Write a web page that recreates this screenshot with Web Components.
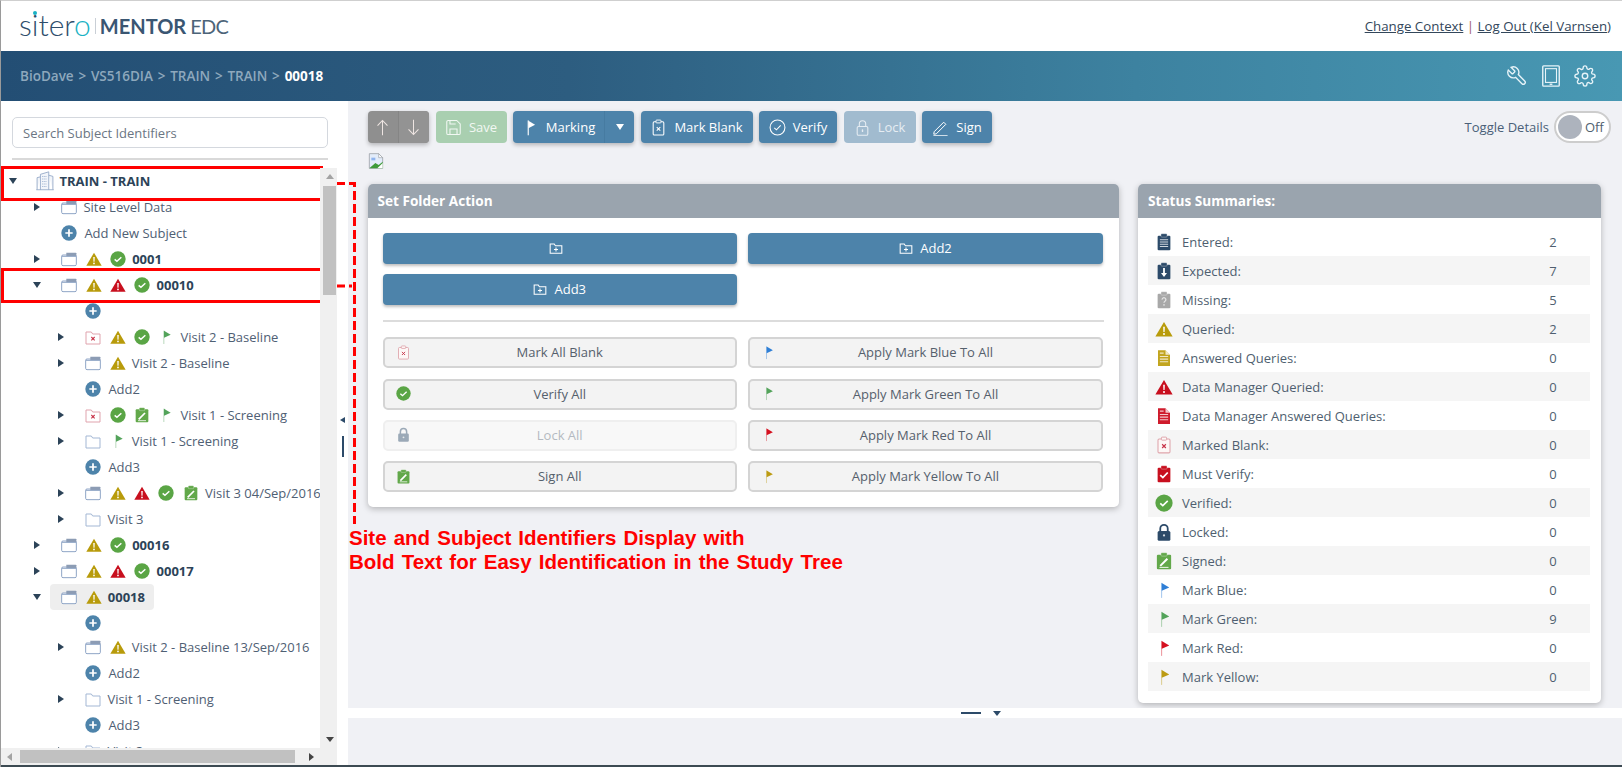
<!DOCTYPE html>
<html lang="en">
<head>
<meta charset="utf-8">
<title>Mentor EDC</title>
<style>
  html, body { margin: 0; padding: 0; background: #f0f1f5; overflow: hidden; }
</style>
</head>
<body>
<edc-app>
  <edc-header></edc-header>
  <edc-banner path="BioDave > VS516DIA > TRAIN > TRAIN" current="00018"></edc-banner>
  <edc-sidebar slot="side">
    <edc-row level="0" arrow="down" icons="building" bold>TRAIN - TRAIN</edc-row>
    <edc-row level="1" arrow="right" icons="folder-tab">Site Level Data</edc-row>
    <edc-row level="1" icons="plus" add>Add New Subject</edc-row>
    <edc-row level="1" arrow="right" icons="folder-tab warn check" bold>0001</edc-row>
    <edc-row level="1" arrow="down" icons="folder-tab warn warn-red check" bold>00010</edc-row>
    <edc-row level="2" icons="plus" add></edc-row>
    <edc-row level="2" arrow="right" icons="folder-x warn check flag-green">Visit 2 - Baseline</edc-row>
    <edc-row level="2" arrow="right" icons="folder-tab warn">Visit 2 - Baseline</edc-row>
    <edc-row level="2" icons="plus" add>Add2</edc-row>
    <edc-row level="2" arrow="right" icons="folder-x check signed flag-green">Visit 1 - Screening</edc-row>
    <edc-row level="2" arrow="right" icons="folder flag-green">Visit 1 - Screening</edc-row>
    <edc-row level="2" icons="plus" add>Add3</edc-row>
    <edc-row level="2" arrow="right" icons="folder-tab warn warn-red check signed">Visit 3 04/Sep/2016</edc-row>
    <edc-row level="2" arrow="right" icons="folder">Visit 3</edc-row>
    <edc-row level="1" arrow="right" icons="folder-tab warn check" bold>00016</edc-row>
    <edc-row level="1" arrow="right" icons="folder-tab warn warn-red check" bold>00017</edc-row>
    <edc-row level="1" arrow="down" icons="folder-tab warn" bold selected>00018</edc-row>
    <edc-row level="2" icons="plus" add></edc-row>
    <edc-row level="2" arrow="right" icons="folder-tab warn" style="margin-top:-2px">Visit 2 - Baseline 13/Sep/2016</edc-row>
    <edc-row level="2" icons="plus" add>Add2</edc-row>
    <edc-row level="2" arrow="right" icons="folder">Visit 1 - Screening</edc-row>
    <edc-row level="2" icons="plus" add>Add3</edc-row>
    <edc-row level="2" arrow="right" icons="folder">Visit 3</edc-row>
  </edc-sidebar>
  <edc-main slot="main">
    <edc-toolbar>
      <edc-nav></edc-nav>
      <edc-tool icon="t-save" kind="save" style="width:71px">Save</edc-tool>
      <edc-tool icon="t-flag" caret style="width:121px">Marking</edc-tool>
      <edc-tool icon="t-clip" style="width:112px">Mark Blank</edc-tool>
      <edc-tool icon="t-check" style="width:78px">Verify</edc-tool>
      <edc-tool icon="t-lock" kind="off" style="width:72px">Lock</edc-tool>
      <edc-tool icon="t-pen" style="width:70px">Sign</edc-tool>
      <edc-toggle>Toggle Details</edc-toggle>
    </edc-toolbar>
    <edc-icon name="broken" size="16" class="broken"></edc-icon>
    <edc-cards>
      <edc-card title="Set Folder Action" style="width:751.5px">
        <edc-grid>
          <edc-add></edc-add>
          <edc-add>Add2</edc-add>
          <edc-add>Add3</edc-add>
        </edc-grid>
        <edc-rule></edc-rule>
        <edc-grid>
          <edc-action icon="blank">Mark All Blank</edc-action>
          <edc-action icon="flag-blue">Apply Mark Blue To All</edc-action>
          <edc-action icon="check">Verify All</edc-action>
          <edc-action icon="flag-green">Apply Mark Green To All</edc-action>
          <edc-action icon="locked" disabled>Lock All</edc-action>
          <edc-action icon="flag-red">Apply Mark Red To All</edc-action>
          <edc-action icon="signed">Sign All</edc-action>
          <edc-action icon="flag-yellow">Apply Mark Yellow To All</edc-action>
        </edc-grid>
      </edc-card>
      <edc-card title="Status Summaries:" flush style="width:463px">
        <edc-stat icon="entered" value="2">Entered:</edc-stat>
        <edc-stat icon="expected" value="7">Expected:</edc-stat>
        <edc-stat icon="missing" value="5">Missing:</edc-stat>
        <edc-stat icon="warn" value="2">Queried:</edc-stat>
        <edc-stat icon="answered" value="0">Answered Queries:</edc-stat>
        <edc-stat icon="warn-red" value="0">Data Manager Queried:</edc-stat>
        <edc-stat icon="answered-red" value="0">Data Manager Answered Queries:</edc-stat>
        <edc-stat icon="blank" value="0">Marked Blank:</edc-stat>
        <edc-stat icon="must" value="0">Must Verify:</edc-stat>
        <edc-stat icon="check" value="0">Verified:</edc-stat>
        <edc-stat icon="locked" value="0">Locked:</edc-stat>
        <edc-stat icon="signed" value="0">Signed:</edc-stat>
        <edc-stat icon="flag-blue" value="0">Mark Blue:</edc-stat>
        <edc-stat icon="flag-green" value="9">Mark Green:</edc-stat>
        <edc-stat icon="flag-red" value="0">Mark Red:</edc-stat>
        <edc-stat icon="flag-yellow" value="0">Mark Yellow:</edc-stat>
      </edc-card>
    </edc-cards>
  </edc-main>
  <edc-callout></edc-callout>
</edc-app>

<script>
// all icons share a 24 x 24 box
const tri = c => `<path d="M12 2.5 23.5 22H.5Z" fill="${c}"/><path d="M10.9 9h2.2l-.3 7h-1.6Z" fill="#fff"/><circle cx="12" cy="18.6" r="1.3" fill="#fff"/>`;
const flag = c => `<rect x="8" y="2.5" width="1.5" height="20" fill="${c}" opacity=".4"/><path d="M9 2.5 19 8.5 9 13Z" fill="${c}"/>`;
const doc = c => `<path d="M4 1.5h10l6 6v15H4Z" fill="${c}"/><path d="M14 1.5v6h6Z" fill="#fff" opacity=".75"/><path d="M6.5 10h11M6.5 13.5h11M6.5 17h11M6.5 5.5h5" stroke="#fff" stroke-opacity=".75" stroke-width="1.5"/>`;
const clip = (c, inner) => `<rect x="3.5" y="3.5" width="17" height="19.5" rx="1.5" fill="${c}"/><rect x="8" y="1" width="8" height="4.5" rx="1" fill="${c}" stroke="#fff" stroke-opacity=".6" stroke-width=".7"/>${inner}`;
const ICONS = {
  'warn': tri('#b89b0b'),
  'warn-red': tri('#c80f1e'),
  'check': `<circle cx="12" cy="12" r="11.5" fill="#5aa545"/><path d="M7 12.5l3.4 3L17 9.3" fill="none" stroke="#fff" stroke-width="2.2"/>`,
  'plus': `<circle cx="12" cy="12" r="11.5" fill="#4d83aa"/><path d="M12 6.5v11M6.5 12h11" stroke="#fff" stroke-width="2.6"/>`,
  'flag-blue': flag('#2f7fd6'),
  'flag-green': flag('#53a35a'),
  'flag-red': flag('#d5101f'),
  'flag-yellow': flag('#bc9b12'),
  'folder': `<path d="M1.5 4.5h8l2 3h11v15h-21Z" fill="#fff" stroke="#a3b7d4" stroke-width="1.5" stroke-linejoin="round"/>`,
  'folder-tab': `<rect x="1" y="6" width="22" height="16" rx="2" fill="#fff" stroke="#8fa5c6" stroke-width="1.5"/><path d="M8 2.5h14a1 1 0 0 1 1 1V8H8Z" fill="#8c9cb4"/><path d="M1 8h22" stroke="#8fa5c6" stroke-width="1.5"/>`,
  'folder-x': `<path d="M1.5 4.5h8l2 3h11v15h-21Z" fill="#fff" stroke="#e0a3ad" stroke-width="1.5" stroke-linejoin="round"/><path d="M9.5 12l5 5M14.5 12l-5 5" stroke="#c8354a" stroke-width="1.6"/>`,
  'building': `<path d="M1.5 22.5h21M2.5 22.5V8l4-1M6.500 22.500V4L16.500 1v21.500M16.500 5l5 1.500v16" fill="#f2f5fa" stroke="#8ea4c4" stroke-width="1"/><path d="M8.500 6.500h6M8.500 9.500h6M8.500 12.500h6M8.500 15.500h6M8.500 18.500h6" stroke="#a9bbd6" stroke-width="1.3" stroke-dasharray="1.3 .7"/>`,
  'entered': clip('#2c4a69', `<path d="M6.5 9h11M6.5 12h11M6.5 15h11M6.5 18h11" stroke="#cfd6dd" stroke-width="1.6"/>`),
  'expected': clip('#2c4a69', `<path d="M12 8v8" stroke="#fff" stroke-width="2.4"/><path d="M8 14.5h8L12 20Z" fill="#fff"/>`),
  'missing': clip('#a8a8a8', `<path d="M9.5 11.5a2.5 2.5 0 1 1 3.8 2.1c-.9.6-1.3 1-1.3 2" fill="none" stroke="#e5e5e5" stroke-width="1.7"/><circle cx="12" cy="18.5" r="1.1" fill="#e5e5e5"/>`),
  'answered': doc('#c2a51f'),
  'answered-red': doc('#cf1b2c'),
  'blank': `<rect x="4" y="4" width="16" height="18.5" rx="1.5" fill="#fdf7f6" stroke="#dfa5ac" stroke-width="1.4"/><rect x="8.5" y="1.5" width="7" height="4" rx="1" fill="#fdf7f6" stroke="#dfa5ac" stroke-width="1.3"/><path d="M9.5 11l5 5M14.5 11l-5 5" stroke="#c8354a" stroke-width="1.5"/>`,
  'must': clip('#c80f1e', `<path d="M7 13.5l3.5 3.3L17 10" fill="none" stroke="#fff" stroke-width="2.4"/>`),
  'locked': `<path d="M7 11V7.5a5 5 0 0 1 10 0V11" fill="none" stroke="#2c4a69" stroke-width="2.4"/><rect x="3.5" y="10.5" width="17" height="13" rx="2" fill="#2c4a69"/><circle cx="12" cy="16.5" r="1.5" fill="#cfd6dd"/>`,
  'signed': `<rect x="2.5" y="3.5" width="19" height="19.5" rx="1.5" fill="#62a84a"/><rect x="8" y="1" width="8" height="4.5" rx="1" fill="#62a84a" stroke="#fff" stroke-opacity=".6" stroke-width=".7"/><path d="M7 18.5l9.5-9.500" stroke="#fff" stroke-width="2.6"/><path d="M6 20.5h12" stroke="#fff" stroke-width="1.2"/>`,
  'broken': `<path d="M2 1h14l6 6v16H2Z" fill="#e3ecf9" stroke="#9aa0a6" stroke-width="1.2"/><path d="M16 1v6h6Z" fill="#fff" stroke="#9aa0a6"/><path d="M5 7h6v4H5Z" fill="#8fb4ee"/><path d="M2 23l9-8 5 3 6-5v10Z" fill="#3f9b3a"/><path d="M14 23l8-8v8Z" fill="#fff"/>`,
  't-save': `<path d="M19.5 22H4.5a2 2 0 0 1-2-2V4a2 2 0 0 1 2-2h12l5 5v13a2 2 0 0 1-2 2z" fill="none" stroke="currentColor" stroke-width="1.5"/><path d="M17 22v-8H7v8M7 2v5h8" fill="none" stroke="currentColor" stroke-width="1.5"/>`,
  't-flag': `<rect x="8" y="2" width="1.6" height="21" fill="currentColor"/><path d="M9 2.5 18.5 8 9 13Z" fill="currentColor"/>`,
  't-clip': `<rect x="4.5" y="4" width="15" height="18.5" rx="1.5" fill="none" stroke="currentColor" stroke-width="1.5"/><rect x="8.5" y="1.5" width="7" height="4" rx="1" fill="#4d83aa" stroke="currentColor" stroke-width="1.3"/><path d="M9.5 11.5l5 5M14.5 11.5l-5 5" stroke="currentColor" stroke-width="1.5"/>`,
  't-check': `<circle cx="12" cy="12" r="10.5" fill="none" stroke="currentColor" stroke-width="1.5"/><path d="M7.5 12.5l3 2.8L16.5 9" fill="none" stroke="currentColor" stroke-width="1.5"/>`,
  't-lock': `<path d="M7.5 11V7a4.5 4.5 0 0 1 9 0v4" fill="none" stroke="currentColor" stroke-width="1.5"/><rect x="4.5" y="10.5" width="15" height="12.5" rx="2" fill="none" stroke="currentColor" stroke-width="1.5"/><rect x="11" y="14.5" width="2" height="4" rx="1" fill="currentColor"/>`,
  't-pen': `<path d="M3 18l-.5 3.5L6 21 19.5 7.5l-3-3Z" fill="none" stroke="currentColor" stroke-width="1.4" stroke-linejoin="round"/><path d="M2 23.5h20" stroke="currentColor" stroke-width="1.2"/>`,
  't-up': `<path d="M12 2v21M5 9.5 12 2l7 7.5" fill="none" stroke="currentColor" stroke-width="1.5"/>`,
  't-down': `<path d="M12 22V1M5 14.5 12 22l7-7.5" fill="none" stroke="currentColor" stroke-width="1.5"/>`,
  't-folder': `<path d="M2 5h7l2 3h11v13H2Z" fill="none" stroke="currentColor" stroke-width="1.8"/><path d="M12 11v7M8.5 14.5h7" stroke="currentColor" stroke-width="1.8"/>`,
  'wrench': `<g transform="translate(24 0) scale(-1 1)"><path d="M14.7 6.3a1 1 0 0 0 0 1.4l1.6 1.6a1 1 0 0 0 1.4 0l3.77-3.77a6 6 0 0 1-7.94 7.94l-6.91 6.91a2.12 2.12 0 0 1-3-3l6.91-6.91a6 6 0 0 1 7.94-7.94l-3.76 3.76z" fill="none" stroke="currentColor" stroke-width="1.5"/></g>`,
  'tablet': `<rect x="3" y="1" width="18" height="22" rx="1" fill="none" stroke="currentColor" stroke-width="1.5"/><rect x="6" y="4" width="12" height="15" fill="none" stroke="currentColor" stroke-width="1.2"/><path d="M10.5 21h3" stroke="currentColor" stroke-width="1.5"/>`,
  'gear': `<circle cx="12" cy="12" r="3" fill="none" stroke="currentColor" stroke-width="1.5"/><path d="M19.4 15a1.65 1.65 0 0 0 .33 1.82l.06.06a2 2 0 0 1 0 2.83 2 2 0 0 1-2.83 0l-.06-.06a1.65 1.65 0 0 0-1.82-.33 1.65 1.65 0 0 0-1 1.51V21a2 2 0 0 1-2 2 2 2 0 0 1-2-2v-.09A1.65 1.65 0 0 0 9 19.4a1.65 1.65 0 0 0-1.82.33l-.06.06a2 2 0 0 1-2.83 0 2 2 0 0 1 0-2.83l.06-.06a1.65 1.65 0 0 0 .33-1.82 1.65 1.65 0 0 0-1.51-1H3a2 2 0 0 1-2-2 2 2 0 0 1 2-2h.09A1.65 1.65 0 0 0 4.6 9a1.65 1.65 0 0 0-.33-1.82l-.06-.06a2 2 0 0 1 0-2.83 2 2 0 0 1 2.83 0l.06.06a1.65 1.65 0 0 0 1.82.33H9a1.65 1.65 0 0 0 1-1.51V3a2 2 0 0 1 2-2 2 2 0 0 1 2 2v.09a1.65 1.65 0 0 0 1 1.51 1.65 1.65 0 0 0 1.82-.33l.06-.06a2 2 0 0 1 2.83 0 2 2 0 0 1 0 2.83l-.06.06a1.65 1.65 0 0 0-.33 1.82V9a1.65 1.65 0 0 0 1.51 1H21a2 2 0 0 1 2 2 2 2 0 0 1-2 2h-.09a1.65 1.65 0 0 0-1.51 1z" fill="none" stroke="currentColor" stroke-width="1.5"/>`
};

// tiny base: the subclass gives css and html, the shadow root is set once
class EdcBase extends HTMLElement {
  constructor() {
    super();
    this.attachShadow({ mode: 'open' });
  }
  connectedCallback() {
    this.shadowRoot.innerHTML = `<style>${this.css()}</style>${this.html()}`;
  }
  css() { return ':host{display:block}'; }
  html() { return '<slot></slot>'; }
}

class EdcIcon extends EdcBase {
  css() {
    const s = this.getAttribute('size') || 16;
    return `:host{display:inline-flex;width:${s}px;height:${s}px;flex:none}svg{width:100%;height:100%;display:block}`;
  }
  html() {
    return `<svg viewBox="0 0 24 24" xmlns="http://www.w3.org/2000/svg">${ICONS[this.getAttribute('name')] || ''}</svg>`;
  }
}

class EdcApp extends EdcBase {
  css() {
    return `:host{display:grid;grid-template-rows:50px 50px 664px 2px;position:relative;width:1622px;height:767px;box-sizing:border-box;
      border-top:1px solid #cfcfcf;border-left:1px solid #9a9a9a;font-family:"Open Sans",sans-serif;font-size:13px;color:#4f5f70;background:#f0f1f5;overflow:hidden}
      .content{display:flex;min-height:0}
      .split{width:11px;flex:none;background:#fff;display:flex;flex-direction:column;align-items:center;padding-top:316px;box-sizing:border-box}
      .split i{display:block;width:0;height:0;border-style:solid;border-width:3.5px 5px 3.5px 0;border-color:transparent #2c4a69 transparent transparent}
      .split b{display:block;width:2px;height:21px;background:#2c4a69;margin-top:13px}
      .foot{background:#3c4a52}`;
  }
  html() {
    return `<slot></slot><div class="content"><slot name="side"></slot>
      <div class="split"><i></i><b></b></div><slot name="main"></slot></div><div class="foot"></div>`;
  }
}

class EdcHeader extends EdcBase {
  css() {
    return `:host{display:flex;align-items:center;justify-content:space-between;background:#fff;padding:0 11px 0 18px;height:50px}
      .logo{display:flex;align-items:center;color:#3a5672}
      .s{position:relative;font-family:Lato,sans-serif;font-weight:300;font-size:30px;line-height:36px;margin-top:-4px;color:#2e4d6b}
      .s em{font-style:normal;color:#19b2c4}
      .s::after{content:"";position:absolute;left:14px;top:5px;width:4px;height:4px;border-radius:50%;background:#19b2c4}
      .d{width:1px;height:16px;background:#c9cfd6;margin:0 4px 0 4px}
      .m{font-family:Lato,sans-serif;font-weight:700;font-size:20px}
      .e{font-family:Lato,sans-serif;font-weight:400;font-size:20px;letter-spacing:-.7px;color:#4c6479;margin-left:4px}
      nav{font-size:13.3px;padding-bottom:1px}
      a{color:#33475b;text-decoration:underline}
      s{text-decoration:none;color:#a05a6a}`;
  }
  html() {
    return `<div class="logo"><span class="s">siter<em>o</em></span><span class="d"></span><span class="m">MENTOR</span><span class="e">EDC</span></div>
      <nav><a>Change Context</a> <s>|</s> <a>Log Out (Kel Varnsen)</a></nav>`;
  }
}

class EdcBanner extends EdcBase {
  css() {
    return `:host{display:flex;align-items:center;justify-content:space-between;height:50px;padding:0 26px 0 19px;
      background:linear-gradient(90deg,#234e74 0%,#2d5d80 35%,#3d82a0 70%,#4898b3 100%);color:#fff}
      .path{font-weight:600;font-size:13.5px;word-spacing:1.3px;color:#8ea8bd;white-space:pre}
      b{color:#fff;font-weight:700}
      .tools{display:flex;gap:12px;color:#e6f3f8}`;
  }
  html() {
    return `<div class="path">${this.getAttribute('path')} &gt; <b>${this.getAttribute('current')}</b></div>
      <div class="tools"><edc-icon name="wrench" size="22"></edc-icon><edc-icon name="tablet" size="22"></edc-icon><edc-icon name="gear" size="22"></edc-icon></div>`;
  }
}

class EdcSidebar extends EdcBase {
  css() {
    return `:host{display:flex;flex-direction:column;width:336px;flex:none;background:#fff;min-height:0}
      .top{padding:16px 9px 0 11px;height:67px;box-sizing:border-box;flex:none}
      input{display:block;width:100%;box-sizing:border-box;height:31px;border:1px solid #d4d8de;border-radius:5px;padding:0 10px;font:13px "Open Sans",sans-serif;color:#4f5f70;outline:none}
      input::placeholder{color:#6b7683;opacity:1}
      hr{border:0;border-top:2px solid #d9d9d9;margin:10px 0 0}
      .mid{flex:1;display:flex;min-height:0}
      .tree{width:319px;overflow:hidden;flex:none;white-space:nowrap}
      .v{flex:1;background:#f0f0f0;position:relative;display:flex;flex-direction:column;align-items:center;padding:0 0 0 2px}
      .v .thumb{width:13px;height:109px;background:#c1c1c1;margin-top:7px}
      .up,.dn,.lf,.rt{width:0;height:0;border-style:solid;flex:none}
      .up{border-width:0 4px 5px;border-color:transparent transparent #a3a3a3;margin-top:6px}
      .dn{border-width:5px 4px 0;border-color:#444 transparent transparent;margin:auto 0 6px}
      .h{height:17px;background:#f0f0f0;display:flex;align-items:center;flex:none;padding-right:17px;box-sizing:border-box}
      .h .thumb{width:275px;height:13px;background:#c1c1c1;margin:0 auto 0 8px}
      .lf{border-width:4px 5px 4px 0;border-color:transparent #a3a3a3 transparent transparent;margin-left:6px}
      .rt{border-width:4px 0 4px 5px;border-color:transparent transparent transparent #444;margin-right:6px}`;
  }
  html() {
    return `<div class="top"><input placeholder="Search Subject Identifiers"><hr></div>
      <div class="mid"><div class="tree"><slot></slot></div>
        <div class="v"><i class="up"></i><div class="thumb"></div><i class="dn"></i></div></div>
      <div class="h"><i class="lf"></i><div class="thumb"></div><i class="rt"></i></div>`;
  }
}

class EdcRow extends EdcBase {
  css() {
    const lv = +this.getAttribute('level') || 0;
    return `:host{display:block;height:26px;white-space:nowrap}
      .r{display:flex;align-items:center;height:26px;padding-left:${3 + 24 * lv}px}
      .ar{width:29px;flex:none;display:flex;padding-left:5px;box-sizing:border-box}
      .ar i{display:block;width:0;height:0;border-style:solid}
      .right{border-width:4.5px 0 4.5px 6px;border-color:transparent transparent transparent #2c4358;margin-left:1px}
      .down{border-width:6px 4.5px 0;border-color:#2c4358 transparent transparent}
      .c{display:flex;align-items:center;height:26px;border-radius:4px}
      :host([selected]) .c{background:#eee;margin-left:-7px;padding:0 9px 0 7px}
      .cell{width:24.4px;flex:none;display:flex;justify-content:center}
      .t{margin-left:2px;font-size:13px;color:#4f6074}
      :host([bold]) .t{font-weight:700;color:#2c4358}
      :host([add]) .t{margin-left:3px}`;
  }
  html() {
    const arrow = this.getAttribute('arrow');
    const cells = (this.getAttribute('icons') || '').split(' ').filter(Boolean)
      .map(n => `<span class="cell"><edc-icon name="${n}" size="${n === 'building' ? 20 : 16}"></edc-icon></span>`).join('');
    return `<div class="r"><span class="ar">${arrow ? `<i class="${arrow}"></i>` : ''}</span>
      <div class="c">${cells}<span class="t"><slot></slot></span></div></div>`;
  }
}

class EdcMain extends EdcBase {
  css() {
    return `:host{display:flex;flex-direction:column;flex:1;min-width:0;background:#f0f1f5}
      .top{height:607px;flex:none;padding:10px 11px 0 19.5px;box-sizing:border-box}
      .band{height:10px;background:#fff;flex:none;position:relative;display:flex;align-items:center;padding-left:613px}
      .band b{display:block;width:20px;height:2px;background:#2c4a69}
      .band i{display:block;width:0;height:0;border-style:solid;border-width:5px 4px 0;border-color:#2c4a69 transparent transparent;margin-left:12px}
      ::slotted(.broken){display:flex;margin-top:10px}`;
  }
  html() {
    return `<div class="top"><slot></slot></div><div class="band"><b></b><i></i></div>`;
  }
}

class EdcToolbar extends EdcBase {
  css() { return ':host{display:flex;gap:6.5px;height:32px;align-items:stretch}'; }
}

class EdcNav extends EdcBase {
  css() {
    return `:host{display:flex;width:61.5px;border-radius:4px;background:#8f8f8f;color:#eee5e2;box-shadow:0 2px 4px rgba(0,0,0,.25);overflow:hidden}
      span{flex:1;display:flex;align-items:center;justify-content:center}
      span+span{border-left:1px solid #858585;background:#939393}`;
  }
  html() {
    return `<span><edc-icon name="t-up" size="17"></edc-icon></span><span><edc-icon name="t-down" size="17"></edc-icon></span>`;
  }
}

class EdcTool extends EdcBase {
  css() {
    return `:host{display:flex;align-items:center;border-radius:4px;background:#4d83aa;color:#fff;box-shadow:0 2px 4px rgba(0,0,0,.25);flex:none;box-sizing:border-box}
      :host([kind=save]){background:#a9cfb0;color:#f2f8f3;box-shadow:none}
      :host([kind=off]){background:#a1bbcf;color:#e6edf3;box-shadow:none}
      .m{flex:1;display:flex;align-items:center;justify-content:center;gap:7px;height:100%}
      .c{width:29px;height:100%;display:flex;align-items:center;justify-content:center;border-left:1px solid #467ba1}
      .c i{display:block;width:0;height:0;border-style:solid;border-width:6px 4.5px 0;border-color:#fff transparent transparent}`;
  }
  html() {
    return `<div class="m"><edc-icon name="${this.getAttribute('icon')}" size="17"></edc-icon><span><slot></slot></span></div>${this.hasAttribute('caret') ? '<div class="c"><i></i></div>' : ''}`;
  }
}

class EdcToggle extends EdcBase {
  css() {
    return `:host{display:flex;align-items:center;gap:5px;margin-left:auto;color:#4a6078;font-size:13px}
      .sw{display:flex;align-items:center;width:57px;height:32px;box-sizing:border-box;border:2px solid #cdcdcd;border-radius:16px;background:#fff;padding-left:2px;color:#4f5f70}
      .sw i{display:block;width:24px;height:24px;border-radius:50%;background:#adb3bd;margin-right:3px}`;
  }
  html() {
    return `<span><slot></slot></span><div class="sw"><i></i><span>Off</span></div>`;
  }
}

class EdcCards extends EdcBase {
  css() { return ':host{display:flex;gap:19px;align-items:flex-start;margin-top:15px}'; }
}

class EdcCard extends EdcBase {
  css() {
    return `:host{display:block;background:#fff;border-radius:5px;box-shadow:0 2px 6px rgba(0,0,0,.25);overflow:hidden;flex:none}
      h3{margin:0;height:34px;line-height:34px;padding:0 10px;background:#9aa4ae;color:#fff;font-size:13.6px;font-weight:700}
      .b{padding:15px}
      :host([flush]) .b{padding:9px 11px 12px 10px}`;
  }
  html() { return `<h3>${this.getAttribute('title')}</h3><div class="b"><slot></slot></div>`; }
}

class EdcGrid extends EdcBase {
  css() { return ':host{display:grid;grid-template-columns:354.5px 355px;column-gap:11px;row-gap:10.3px}'; }
}

class EdcRule extends EdcBase {
  css() { return ':host{display:block;border-top:2px solid #dcdcdc;margin:15px 0 15px}'; }
  html() { return ''; }
}

class EdcAdd extends EdcBase {
  css() {
    return `:host{display:flex;align-items:center;justify-content:center;gap:7px;height:31px;box-sizing:border-box;padding-bottom:2px;border-radius:4px;background:#4d83aa;color:#fff;box-shadow:0 2px 3px rgba(0,0,0,.25)}`;
  }
  html() { return `<edc-icon name="t-folder" size="14"></edc-icon><span><slot></slot></span>`; }
}

class EdcAction extends EdcBase {
  css() {
    return `:host{display:grid;grid-template-columns:1fr auto 1fr;align-items:center;height:31px;box-sizing:border-box;padding:0 0 1px 11px;
        border:2px solid #d4d4d4;border-radius:5px;background:#f3f3f3;color:#55606c}
      :host([disabled]){border-color:#efefef;background:#f8f8f8;color:#b4bac1}
      :host([disabled]) edc-icon{opacity:.45}
      span{margin-left:-11px}`;
  }
  html() {
    return `<edc-icon name="${this.getAttribute('icon')}" size="15"></edc-icon><span><slot></slot></span><i></i>`;
  }
}

class EdcStat extends EdcBase {
  css() {
    return `:host{display:flex;align-items:center;height:29px}
      :host(:nth-child(even)){background:#f5f5f5}
      edc-icon{margin-left:7px;margin-right:9px}
      .l{flex:1}
      .v{width:20px;margin-right:27px;text-align:center}`;
  }
  html() {
    return `<edc-icon name="${this.getAttribute('icon')}" size="18"></edc-icon><span class="l"><slot></slot></span><span class="v">${this.getAttribute('value')}</span>`;
  }
}

// the red notes drawn over the screenshot
class EdcCallout extends EdcBase {
  css() {
    return `:host{position:absolute;left:-1px;top:-1px;width:1622px;height:767px;pointer-events:none}
      .box{position:absolute;left:1px;width:322px;height:35px;box-sizing:border-box;border:3px solid #f00}
      svg{position:absolute;left:0;top:0}
      p{position:absolute;left:349px;top:526px;margin:0;font:700 20.5px/24px "Liberation Sans",Arial,sans-serif;word-spacing:1.4px;color:#f00;white-space:nowrap}`;
  }
  html() {
    return `<div class="box" style="top:166px"></div><div class="box" style="top:268px"></div>
      <svg width="1622" height="767" fill="none" stroke="#f00" stroke-width="3" stroke-dasharray="9 4">
        <path d="M323 183.5H354.5V524"/><path d="M323 286H352"/></svg>
      <p>Site and Subject Identifiers Display with<br>Bold Text for Easy Identification in the Study Tree</p>`;
  }
}

customElements.define('edc-icon', EdcIcon);
customElements.define('edc-app', EdcApp);
customElements.define('edc-header', EdcHeader);
customElements.define('edc-banner', EdcBanner);
customElements.define('edc-sidebar', EdcSidebar);
customElements.define('edc-row', EdcRow);
customElements.define('edc-main', EdcMain);
customElements.define('edc-toolbar', EdcToolbar);
customElements.define('edc-nav', EdcNav);
customElements.define('edc-tool', EdcTool);
customElements.define('edc-toggle', EdcToggle);
customElements.define('edc-cards', EdcCards);
customElements.define('edc-card', EdcCard);
customElements.define('edc-grid', EdcGrid);
customElements.define('edc-rule', EdcRule);
customElements.define('edc-add', EdcAdd);
customElements.define('edc-action', EdcAction);
customElements.define('edc-stat', EdcStat);
customElements.define('edc-callout', EdcCallout);
</script>
</body>
</html>
